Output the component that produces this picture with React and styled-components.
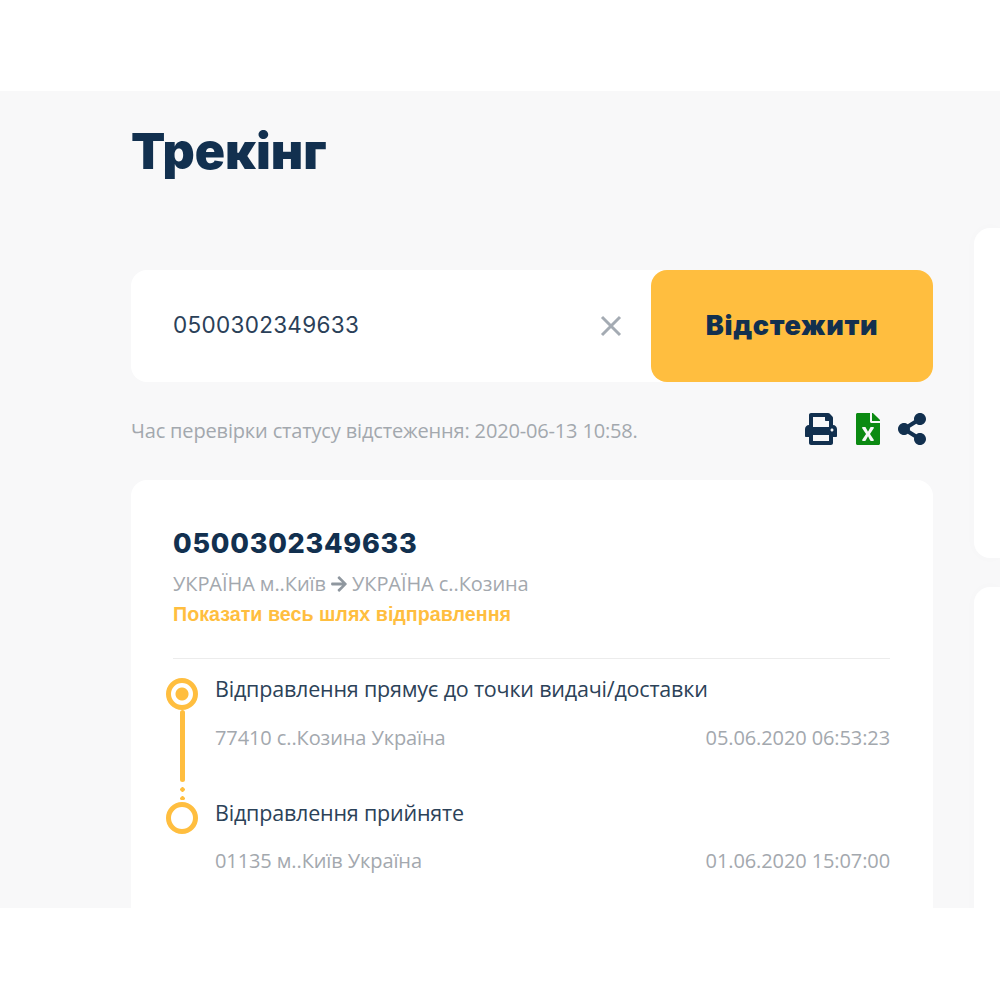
import React from 'react';
import styled, { createGlobalStyle } from "styled-components";
import { FaPrint, FaShareAlt, FaFileExcel, FaArrowRight } from "react-icons/fa";

const NAVY = "#12304f";
const AMBER = "#ffbe3f";
const GREY = "#a3a8ae";

const events = [
    { title: "Відправлення прямує до точки видачі/доставки", place: "77410 с..Козина Україна", date: "05.06.2020 06:53:23", current: true },
    { title: "Відправлення прийняте", place: "01135 м..Київ Україна", date: "01.06.2020 15:07:00", current: false },
];

function App()
{
    return (
        <Page>
            <GlobalStyle />
            <Section>
                <MainColumn>
                    <Title>Трекінг</Title>
                    <SearchBar>
                        <SearchField>
                            <SearchValue>0500302349633</SearchValue>
                            <ClearIcon viewBox="0 0 22 22">
                                <path d="M2 2 L20 20 M20 2 L2 20" />
                            </ClearIcon>
                        </SearchField>
                        <TrackButton type="button">Відстежити</TrackButton>
                    </SearchBar>
                    <StatusRow>
                        <StatusText>Час перевірки статусу відстеження: 2020-06-13 10:58.</StatusText>
                        <Tools>
                            <FaPrint size={32} color={NAVY} />
                            <FaFileExcel size={32} color="#0b8a12" />
                            <FaShareAlt size={32} color={NAVY} />
                        </Tools>
                    </StatusRow>
                    <Card>
                        <TrackNumber>0500302349633</TrackNumber>
                        <Route>
                            УКРАЇНА м..Київ
                            <FaArrowRight size={18} color="#8f979f" />
                            УКРАЇНА с..Козина
                        </Route>
                        <ShowAll>Показати весь шлях відправлення</ShowAll>
                        <Divider />
                        {events.map((item, i) => (
                            <Event key={item.date}>
                                <Marker>
                                    <Dot $current={item.current} />
                                    {i < events.length - 1 && (
                                        <>
                                            <Line />
                                            <Dots />
                                        </>
                                    )}
                                </Marker>
                                <EventBody>
                                    <EventTitle>{item.title}</EventTitle>
                                    <EventMeta>
                                        <span>{item.place}</span>
                                        <span>{item.date}</span>
                                    </EventMeta>
                                </EventBody>
                            </Event>
                        ))}
                    </Card>
                </MainColumn>
                <SideColumn>
                    <SideCard $height="330px" />
                    <SideCard $height="400px" />
                </SideColumn>
            </Section>
        </Page>
    );
};

const GlobalStyle = createGlobalStyle`
  html, body {
    margin: 0;
    padding: 0;
    background: #ffffff;
  }
`;

const Page = styled.div`
  height: 1000px;
  padding-top: 91px;
  box-sizing: border-box;
  overflow: hidden;
  font-family: "Open Sans", sans-serif;
`;

const Section = styled.div`
  height: 817px;
  background: #f8f8f9;
  overflow: hidden;
  display: flex;
  gap: 41px;
  padding-left: 131px;
`;

const MainColumn = styled.div`
  width: 802px;
  flex-shrink: 0;
`;

const Title = styled.h1`
  margin: 28px 0 0 0;
  font-family: "Inter", sans-serif;
  font-weight: 900;
  font-size: 50px;
  line-height: 64px;
  color: ${NAVY};
`;

const SearchBar = styled.div`
  display: flex;
  height: 112px;
  margin-top: 87px;
  background: #ffffff;
  border-radius: 16px;
`;

const SearchField = styled.div`
  flex: 1;
  display: flex;
  align-items: center;
  justify-content: space-between;
  padding: 0 29px 0 42px;
`;

const SearchValue = styled.span`
  margin-top: -3px;
  font-family: "Inter", sans-serif;
  font-size: 22.5px;
  letter-spacing: 0.3px;
  color: #2a4058;
`;

const ClearIcon = styled.svg`
  width: 22px;
  height: 22px;
  fill: none;
  stroke: #a4abb3;
  stroke-width: 3;
`;

const TrackButton = styled.button`
  width: 282px;
  padding-bottom: 3px;
  border: none;
  border-radius: 16px;
  background: ${AMBER};
  font-family: "Inter", sans-serif;
  font-weight: 900;
  font-size: 27px;
  letter-spacing: 0.7px;
  color: ${NAVY};
`;

const StatusRow = styled.div`
  display: flex;
  align-items: center;
  justify-content: space-between;
  height: 98px;
  padding-right: 5px;
`;

const StatusText = styled.span`
  font-size: 20px;
  letter-spacing: -0.16px;
  color: ${GREY};
  margin-top: -2px;
`;

const Tools = styled.div`
  display: flex;
  align-items: center;
  margin-top: -4px;

  svg:first-child {
    margin-right: 15px;
  }

  svg:last-child {
    margin-left: 12px;
  }
`;

const Card = styled.div`
  height: 500px;
  background: #ffffff;
  border-radius: 16px;
  padding: 45px 43px 0 42px;
  box-sizing: border-box;
`;

const TrackNumber = styled.div`
  font-family: "Inter", sans-serif;
  font-weight: 800;
  font-size: 27px;
  line-height: 38px;
  letter-spacing: 0.75px;
  color: ${NAVY};
`;

const Route = styled.div`
  display: flex;
  align-items: center;
  gap: 4px;
  margin-top: 6px;
  font-size: 20px;
  line-height: 30px;
  letter-spacing: -0.07px;
  color: ${GREY};
`;

const ShowAll = styled.div`
  font-family: "Liberation Sans", sans-serif;
  font-weight: 700;
  font-size: 19.7px;
  line-height: 30px;
  color: ${AMBER};
`;

const Divider = styled.hr`
  border: none;
  border-top: 1px solid #ececec;
  margin: 29px 0 0 0;
`;

const Event = styled.div`
  position: relative;
  display: flex;
  height: 123.5px;
  padding-left: 42px;
`;

const Marker = styled.div`
  position: absolute;
  left: -7px;
  top: 19px;
  width: 32px;
  display: flex;
  flex-direction: column;
  align-items: center;
`;

const Dot = styled.div`
  width: 32px;
  height: 32px;
  box-sizing: border-box;
  border-radius: 50%;
  border: 5px solid ${AMBER};
  background: ${(p) => (p.$current ? `radial-gradient(circle, ${AMBER} 0 6px, #ffffff 7px)` : "#ffffff")};
`;

const Line = styled.div`
  width: 5px;
  height: 72px;
  border-radius: 3px;
  background: ${AMBER};
`;

const Dots = styled.div`
  width: 5px;
  height: 15px;
  margin-top: 3px;
  background: radial-gradient(circle, ${AMBER} 2px, transparent 2.5px) center top / 5px 9px repeat-y;
`;

const EventBody = styled.div`
  flex: 1;
  padding-top: 14px;
`;

const EventTitle = styled.div`
  font-size: 21.5px;
  line-height: 32px;
  letter-spacing: -0.2px;
  color: #2c4258;
`;

const EventMeta = styled.div`
  display: flex;
  justify-content: space-between;
  margin-top: 16.5px;
  font-size: 20px;
  line-height: 32px;
  letter-spacing: -0.1px;
  color: ${GREY};
`;

const SideColumn = styled.div`
  flex: 1;
  display: flex;
  flex-direction: column;
  gap: 29px;
  padding-top: 137px;
`;

const SideCard = styled.div`
  height: ${(p) => p.$height};
  flex-shrink: 0;
  background: #ffffff;
  border-radius: 16px 0 0 16px;
  box-shadow: 0 0 16px rgba(0, 0, 0, 0.015);
`;

export default App;
